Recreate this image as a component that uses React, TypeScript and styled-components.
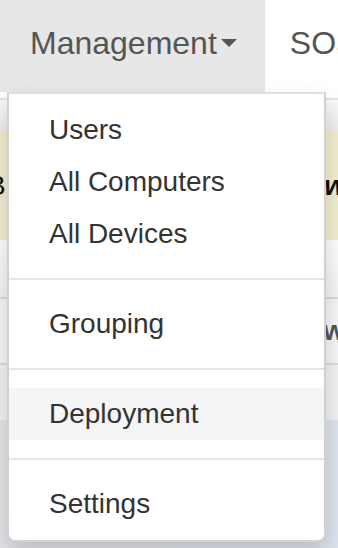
import React from "react";
import styled, { createGlobalStyle } from "styled-components";

const GlobalStyle = createGlobalStyle`
  html, body {
    margin: 0;
    padding: 0;
    background: #ffffff;
    overflow: hidden;
  }
  body {
    font-family: "Liberation Sans", Arial, Helvetica, sans-serif;
  }
`;

type MenuEntry = { label: string; active?: boolean } | "divider";

const menuEntries: MenuEntry[] = [
  { label: "Users" },
  { label: "All Computers" },
  { label: "All Devices" },
  "divider",
  { label: "Grouping" },
  "divider",
  { label: "Deployment", active: true },
  "divider",
  { label: "Settings" },
];

function App() {
  return (
    <Page>
      <GlobalStyle />
      <Navbar>
        <NavTab $active>
          Management
          <Caret />
        </NavTab>
        <NavTab>SOS</NavTab>
      </Navbar>
      <NavRule />
      <Shade />
      <Alert>
        <AlertText>B</AlertText>
        <AlertLink>w</AlertLink>
      </Alert>
      <Spacer />
      <ToolRow>
        <ToolLabel>w</ToolLabel>
      </ToolRow>
      <Filler />
      <Panel />

      <DropdownMenu>
        {menuEntries.map((entry, index) =>
          entry === "divider" ? (
            <Divider key={index} />
          ) : (
            <MenuItem key={index} $active={entry.active}>
              {entry.label}
            </MenuItem>
          )
        )}
      </DropdownMenu>
    </Page>
  );
}

export default App;

const Page = styled.div`
  position: relative;
  width: 338px;
  height: 548px;
  display: flex;
  flex-direction: column;
  overflow: hidden;
  background: #ffffff;
`;

const Navbar = styled.div`
  height: 92px;
  display: flex;
  flex-direction: row;
  align-items: stretch;
  background: #ffffff;
  white-space: nowrap;
`;

const NavTab = styled.div<{ $active?: boolean }>`
  display: flex;
  align-items: center;
  padding-bottom: 6px;
  box-sizing: border-box;
  font-size: 32px;
  color: #555555;
  background: ${(p) => (p.$active ? "#e7e7e7" : "transparent")};
  padding-right: ${(p) => (p.$active ? "28px" : "0")};
  padding-left: ${(p) => (p.$active ? "30px" : "25px")};
`;

const Caret = styled.span`
  display: inline-block;
  width: 0;
  height: 0;
  margin-left: 4px;
  border-top: 8px solid #555555;
  border-left: 8px solid transparent;
  border-right: 8px solid transparent;
`;

const NavRule = styled.div`
  height: 6px;
  border-bottom: 2px solid #e2e2e2;
  background: #ffffff;
`;

const Shade = styled.div`
  height: 32px;
  background: linear-gradient(#f9f9f9, #efefef);
`;

const Alert = styled.div`
  height: 108px;
  display: flex;
  align-items: center;
  justify-content: space-between;
  background: #f3eecf;
  font-size: 28px;
  color: #111111;
  overflow: hidden;
`;

const AlertText = styled.span`
  margin-left: -13px;
`;

const AlertLink = styled.span`
  margin-right: -8px;
  font-style: italic;
  font-weight: bold;
`;

const Spacer = styled.div`
  height: 57px;
  background: linear-gradient(#ffffff, #f4f4f4);
`;

const ToolRow = styled.div`
  height: 64px;
  display: flex;
  align-items: center;
  justify-content: flex-end;
  border-top: 2px solid #dcdcdc;
  border-bottom: 2px solid #dcdcdc;
  background: #f7f7f7;
  overflow: hidden;
`;

const ToolLabel = styled.span`
  margin-right: -7px;
  font-size: 28px;
  font-weight: bold;
  color: #555555;
`;

const Filler = styled.div`
  height: 55px;
  background: #f3f3f3;
`;

const Panel = styled.div`
  flex: 1;
  background: linear-gradient(90deg, #e6e5ea, #dfe5ee);
`;

const DropdownMenu = styled.ul`
  position: absolute;
  top: 92px;
  left: 7px;
  width: 319px;
  box-sizing: border-box;
  margin: 0;
  padding: 10px 0;
  list-style: none;
  background: #ffffff;
  border: 2px solid rgba(0, 0, 0, 0.18);
  border-top-color: rgba(0, 0, 0, 0.12);
  border-radius: 0 0 8px 8px;
  box-shadow: 0 12px 24px rgba(0, 0, 0, 0.175);
`;

const MenuItem = styled.li<{ $active?: boolean }>`
  padding: 6px 40px;
  line-height: 40px;
  font-size: 28px;
  color: #333333;
  white-space: nowrap;
  background: ${(p) => (p.$active ? "#f5f5f5" : "transparent")};
`;

const Divider = styled.li`
  height: 2px;
  margin: 18px 0;
  background: #e5e5e5;
`;
